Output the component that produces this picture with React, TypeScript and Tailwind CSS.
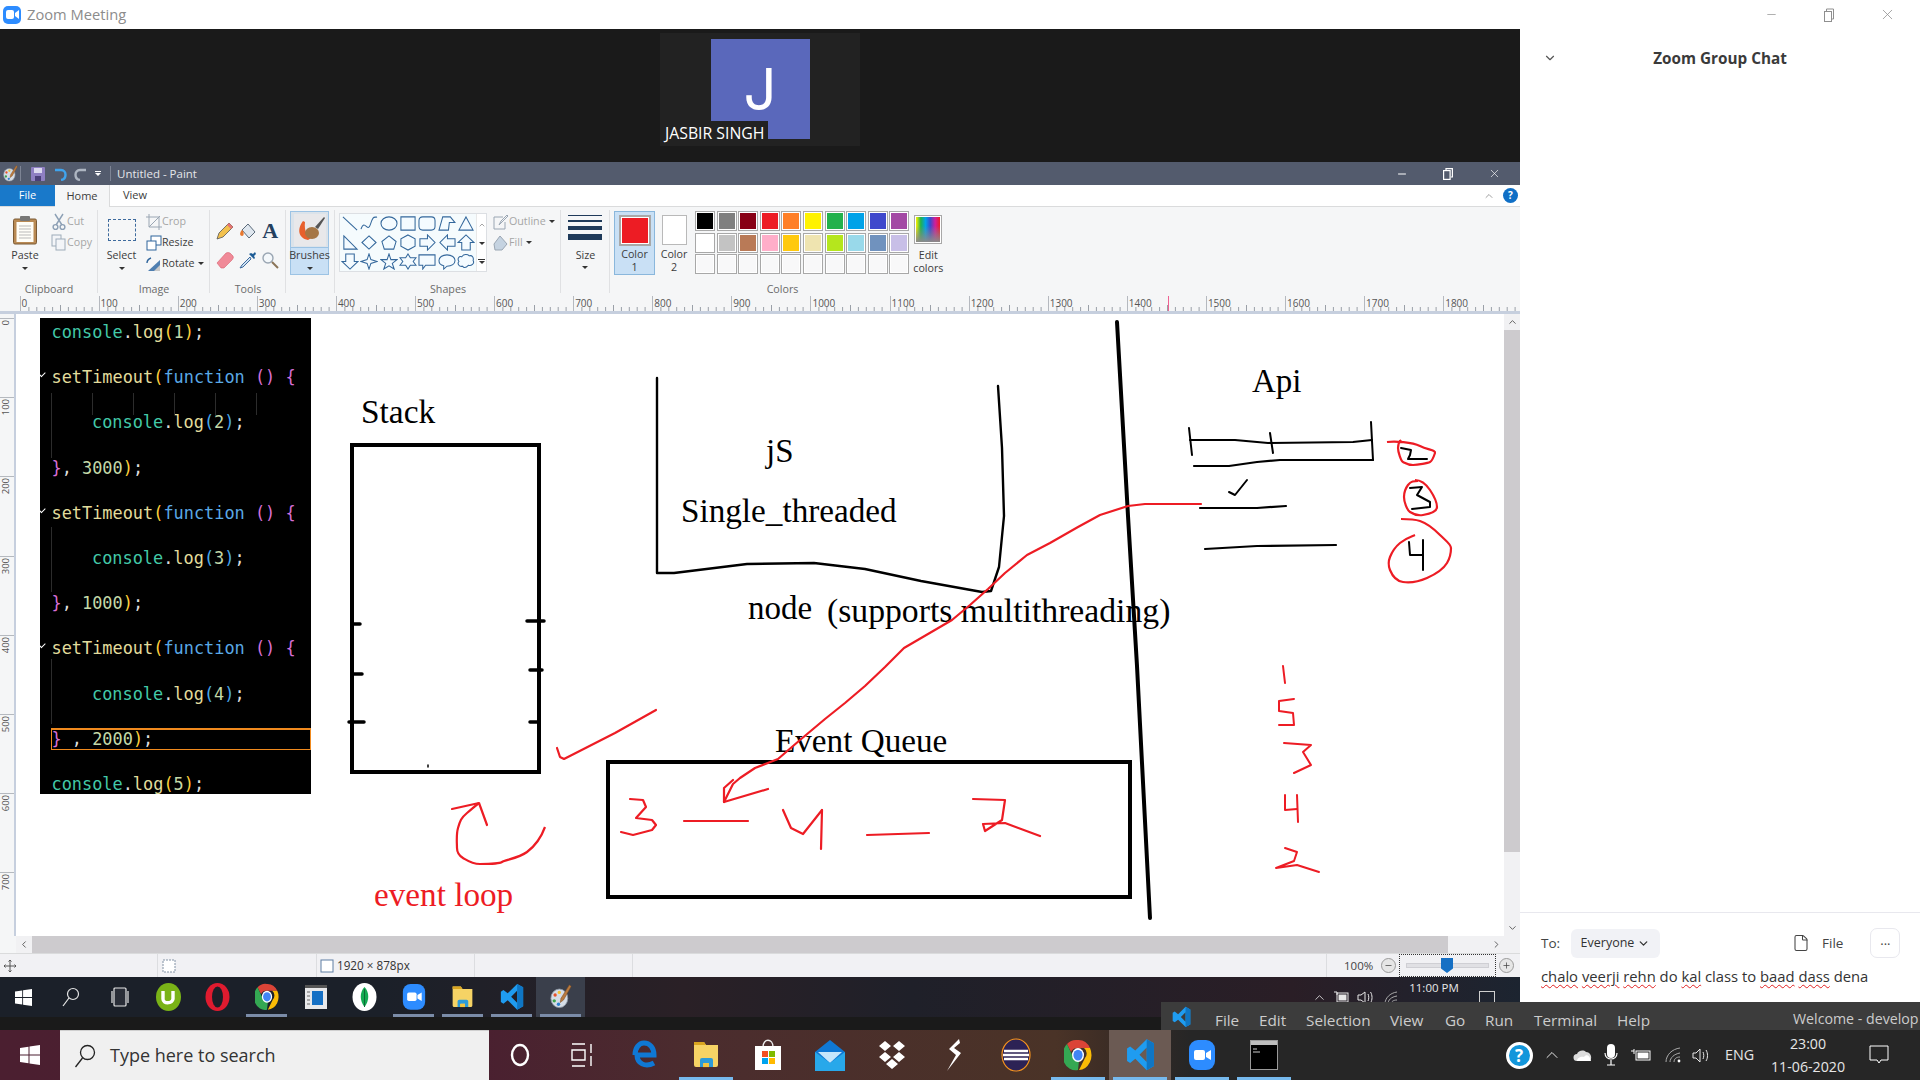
import React from "react";
import { ChevronDown, ChevronUp, ChevronLeft, ChevronRight, File as FileIcon, Minus, Plus, X } from "lucide-react";

const Win = ({ s = 20, c = "#fff" }: { s?: number; c?: string }) => (
  <svg width={s} height={s} viewBox="0 0 20 20"><path fill={c} d="M0 3l8.5-1.2v7.6H0zM9.5 1.6L20 0v9.4H9.5zM0 10.5h8.5v7.7L0 17zM9.5 10.5H20V20L9.5 18.4z" /></svg>
);
const ZoomIcon = ({ s = 28 }: { s?: number }) => (
  <svg width={s} height={s * 1.15} viewBox="0 0 28 32"><rect x="1" y="1" width="26" height="30" rx="9" fill="#2d8cff" /><rect x="6" y="11" width="11" height="10" rx="2" fill="#fff" /><path d="M18 14l5-3v10l-5-3z" fill="#fff" /></svg>
);
const Chrome = ({ s = 28 }: { s?: number }) => (
  <svg width={s} height={s * 1.15} viewBox="0 0 28 32">
    <path d="M14 1a13 15 0 0 1 12 8H14a7 7 0 0 0-7 4L3 5a13 15 0 0 1 11-4z" fill="#db4437" />
    <path d="M26 9a13 15 0 0 1-11 22l6-12a7 7 0 0 0-1-10z" fill="#fbbc05" />
    <path d="M3 5l6 13a7 7 0 0 0 6 4l-1 9A13 15 0 0 1 3 5z" fill="#34a853" />
    <ellipse cx="14" cy="16" rx="6" ry="7" fill="#fff" /><ellipse cx="14" cy="16" rx="4.6" ry="5.4" fill="#4285f4" />
  </svg>
);
const VS = ({ s = 28 }: { s?: number }) => (
  <svg width={s} height={s * 1.15} viewBox="0 0 28 32">
    <path d="M20 1l7 4v22l-7 4-11-11-5 4-3-2V10l3-2 5 4zM20 9l-7 7 7 7z" fill="#1f9cf0" />
    <path d="M20 1l7 4v22l-7 4z" fill="#0f76c4" />
  </svg>
);
const Folder = ({ s = 28 }: { s?: number }) => (
  <svg width={s} height={s * 1.15} viewBox="0 0 28 32">
    <path d="M2 3h10l2 3h12v20a2 2 0 0 1-2 2H4a2 2 0 0 1-2-2z" fill="#f6d365" /><path d="M2 3h10l2 3H2z" fill="#d9a520" />
    <path d="M8 28v-7a2 2 0 0 1 2-2h9a2 2 0 0 1 2 2v7h-4v-4h-5v4z" fill="#2d9bd8" /><rect x="11" y="24" width="6" height="4" fill="#f3c441" />
  </svg>
);
const Palette = ({ s = 26 }: { s?: number }) => (
  <svg width={s} height={s * 1.15} viewBox="0 0 26 30">
    <ellipse cx="11" cy="17" rx="10" ry="11" fill="#d5dde6" stroke="#8d97a5" />
    <circle cx="6" cy="13" r="2" fill="#e6532d" /><circle cx="11" cy="10" r="2" fill="#f6c232" /><circle cx="5" cy="20" r="2" fill="#3fa34d" /><circle cx="10" cy="24" r="2" fill="#2b7fd1" />
    <path d="M23 1l2 2-9 16-4 3 1-5z" fill="#b97a3f" stroke="#7a4c22" strokeWidth="0.6" />
  </svg>
);
const Slot = ({ w, bar, barC, bg, icon }: { w: string; bar?: boolean; barC?: string; bg?: string; icon: React.ReactNode }) => (
  <div className={`relative h-full flex items-center justify-center shrink-0 ${w} ${bg ?? ""}`}>
    {icon}
    {bar && <div className={`absolute bottom-0 left-[4px] right-[4px] h-[3px] ${barC ?? "bg-[#76b9ed]"}`} />}
  </div>
);

function RulerTicks() {
  return (
    <svg width="79" height="6" className="absolute bottom-0 left-0">
      {[1, 2, 3, 4, 5, 6, 7, 8, 9].map((i) => (
        <line key={i} x1={i * 7.9} x2={i * 7.9} y1={i === 5 ? 0 : 2} y2={6} stroke="#9aa0a8" />
      ))}
    </svg>
  );
}

const Small = ({ icon, label, dim, caret }: { icon: React.ReactNode; label: string; dim?: boolean; caret?: boolean }) => (
  <div className={`h-[21px] flex items-center text-[10.7px] whitespace-nowrap ${dim ? "text-[#a6a6a6]" : "text-[#3c3c3c]"}`}>
    <div className="w-[17px] h-[18px] flex items-center justify-center shrink-0">{icon}</div>
    <span>{label}</span>
    {caret && <span className="ml-[3px] w-0 h-0 border-x-[3px] border-x-transparent border-t-[3px] border-t-[#333]" />}
  </div>
);
const Caret = () => <div className="w-0 h-0 border-x-[3px] border-x-transparent border-t-[3px] border-t-[#333]" />;
const BigBtn = ({ w, icon, l1, l2, cls }: { w: string; icon: React.ReactNode; l1: string; l2?: string; cls?: string }) => (
  <div className={`h-[64px] flex flex-col items-center shrink-0 ${w} ${cls ?? ""}`}>
    <div className="h-[37px] flex items-center justify-center">{icon}</div>
    <div className="h-[14px] leading-[14px] text-[10.7px] text-[#3c3c3c]">{l1}</div>
    <div className="h-[13px] flex items-center text-[10.7px] text-[#3c3c3c]">{l2 ? l2 : <Caret />}</div>
  </div>
);
const Section = ({ w, label, children, noBorder }: { w: string; label?: string; children: React.ReactNode; noBorder?: boolean }) => (
  <div className={`relative flex flex-col shrink-0 ${w}`}>
    <div className="h-[75px] pt-[4px] flex">{children}</div>
    <div className="h-[14px] leading-[14px] text-center text-[10.7px] text-[#6b6b6b]">{label}</div>
    {!noBorder && <div className="absolute right-0 top-[3px] bottom-[3px] w-px bg-[#e0e1e3]" />}
  </div>
);

const polys: (string | { d: string })[] = [
  { d: "M2 2L17 16" },
  { d: "M1 15C5 3 8 20 11 10S15 3 18 2" },
  { d: "M9.5 2C14 2 18 5 18 9s-4 7-8.5 7S1 13 1 9s4-7 8.5-7z" },
  { d: "M2 2H17V16H2Z" },
  { d: "M5 2H14Q18 2 18 6V12Q18 16 14 16H5Q1 16 1 12V6Q1 2 5 2Z" },
  { d: "M5 2H13L18 8H12L11 16H1Z" },
  "9.5,2 17,16 2,16",
  "3,2 17,16 3,16",
  "9.5,2 17,9 9.5,16 2,9",
  "9.5,2 17,8 14.5,16 4.5,16 2,8",
  "9.5,1 17,5 17,13 9.5,17 2,13 2,5",
  "2,5 10,5 10,1 18,9 10,17 10,13 2,13",
  "18,5 10,5 10,1 2,9 10,17 10,13 18,13",
  "5,17 5,9 1,9 9.5,1 18,9 14,9 14,17",
  "5,1 5,9 1,9 9.5,17 18,9 14,9 14,1",
  "9.5,1 11.5,7 18,9 11.5,11 9.5,17 7.5,11 1,9 7.5,7",
  "9.5,1 11.5,7 18,7 13,11 15,17 9.5,13.5 4,17 6,11 1,7 7.5,7",
  "9.5,1 12,5 18,5 15,9 18,13 12,13 9.5,17 7,13 1,13 4,9 1,5 7,5",
  { d: "M1 2H18V13H8L5 17V13H1Z" },
  { d: "M9.5 2C14.5 2 18 4.5 18 8S14.5 14 9.5 14L6 17V13.5C3 13 1 11 1 8 1 4.5 4.5 2 9.5 2Z" },
  { d: "M5 4C7 1 11 1 13 3 16 2 18 5 17 8 19 11 15 14 12 13 9 16 7 16 6 14 2 15 0 11 2 9 0 6 2 3 5 4Z" },
];

const palette = [
  ["#000000", "#7f7f7f", "#880015", "#ed1c24", "#ff7f27", "#fff200", "#22b14c", "#00a2e8", "#3f48cc", "#a349a4"],
  ["#ffffff", "#c3c3c3", "#b97a57", "#ffaec9", "#ffc90e", "#efe4b0", "#b5e61d", "#99d9ea", "#7092be", "#c8bfe7"],
  Array(10).fill("#f8f8f9"),
];

function Ribbon() {
  return (
    <div className="h-[89px] bg-[#f5f6f7] flex">
      <Section w="w-[98px]" label="Clipboard">
        <BigBtn w="w-[50px]" l1="Paste" icon={
          <svg width="26" height="30" viewBox="0 0 26 30"><rect x="1.5" y="4" width="23" height="25" rx="1.5" fill="#b98a54" stroke="#7b5a34" /><rect x="4.5" y="7" width="17" height="20" fill="#fffef8" /><rect x="8" y="1" width="10" height="5" rx="1" fill="#777" /><path d="M7 11h12M7 14h12M7 17h12M7 20h12M7 23h12" stroke="#b9b9b9" /></svg>
        } />
        <div className="flex flex-col">
          <Small dim label="Cut" icon={<svg width="14" height="18" viewBox="0 0 14 18" fill="none" stroke="#8da0b5" strokeWidth="1.4"><path d="M3 1l7 11M11 1L4 12" /><circle cx="3.5" cy="14" r="2.4" /><circle cx="10.5" cy="14" r="2.4" /></svg>} />
          <Small dim label="Copy" icon={<svg width="15" height="17" viewBox="0 0 15 17" fill="#f3f5f8" stroke="#9eabb9"><rect x="1" y="1" width="9" height="11" /><rect x="5" y="5" width="9" height="11" /></svg>} />
        </div>
      </Section>
      <Section w="w-[112px]" label="Image">
        <BigBtn w="w-[47px]" l1="Select" icon={<div className="w-[28px] h-[22px] border border-dashed border-[#3d6a9d]" />} />
        <div className="flex flex-col">
          <Small dim label="Crop" icon={<svg width="16" height="16" viewBox="0 0 16 16" fill="none" stroke="#9aa6b3"><path d="M3 0v13h13M0 3h13v13M3 13L14 2" /></svg>} />
          <Small label="Resize" icon={<svg width="16" height="16" viewBox="0 0 16 16" fill="#fff" stroke="#2f659c"><rect x="5" y="1" width="10" height="9" /><rect x="1" y="6" width="9" height="9" /></svg>} />
          <Small caret label="Rotate" icon={<svg width="17" height="16" viewBox="0 0 17 16"><path d="M15 15H3L15 4z" fill="#4e7eb0" /><path d="M15 15H9L15 9z" fill="#c9c9c9" /><path d="M2 7c0-3 1-4 4-5" stroke="#2f659c" strokeWidth="1.4" fill="none" /></svg>} />
        </div>
      </Section>
      <Section w="w-[76px]" label="Tools">
        <div className="pl-[4px] pt-[5px] grid grid-cols-[repeat(3,22.5px)] grid-rows-[repeat(2,29px)] place-items-center">
          <svg width="18" height="18" viewBox="0 0 18 18"><path d="M1 17l2-6L13 1l4 4L7 15z" fill="#f2c14e" stroke="#555" strokeWidth="0.8" /><path d="M13 1l4 4-2 2-4-4z" fill="#e57373" /></svg>
          <svg width="18" height="18" viewBox="0 0 18 18"><path d="M9 2l7 8-6 6-7-8z" fill="#dfe7ef" stroke="#5a6a7a" /><path d="M3 8c-3 3-2 6 0 6s2-3 1-5z" fill="#e8782f" /></svg>
          <span className="font-['Liberation_Serif',serif] font-bold text-[22px] leading-none text-[#24405f]">A</span>
          <svg width="18" height="18" viewBox="0 0 18 18"><path d="M1 12L10 2q2-1 4 0l3 3q1 2-1 4l-8 8H5z" fill="#f08a98" stroke="#d6606f" strokeWidth="0.6" /></svg>
          <svg width="18" height="18" viewBox="0 0 18 18"><path d="M11 6L3 14l-2 3 3-1 8-8z" fill="#cfe2f3" stroke="#3d6a9d" /><path d="M10 3l5 5 1-1-1-2 2-2-1-2-2 2-2-1z" fill="#1d5c96" /></svg>
          <svg width="18" height="18" viewBox="0 0 18 18" fill="none"><circle cx="7" cy="7" r="5" stroke="#9aa6b3" strokeWidth="1.4" fill="#f4f8fb" /><path d="M11 11l6 6" stroke="#8a7458" strokeWidth="2" /></svg>
        </div>
      </Section>
      <Section w="w-[49px]">
        <div className="ml-[4px] w-[39px] h-[64px] bg-[#c9e0f5] border border-[#9cc3e4] flex flex-col items-center">
          <div className="w-full h-[36px] border-b border-[#9cc3e4] flex items-center justify-center bg-[#dbe3ea]">
            <svg width="32" height="32" viewBox="0 0 32 32"><rect width="32" height="32" fill="#e8e8ea" /><path d="M9 7c-6 8-5 17 5 19l5-3c-6 0-9-6-8-15z" fill="#e8602c" /><ellipse cx="18" cy="19" rx="7" ry="6" fill="#a57645" /><path d="M21 13L30 3l1 1-7 11z" fill="#555" /></svg>
          </div>
          <div className="h-[14px] leading-[14px] text-[10.7px] text-[#3c3c3c]">Brushes</div>
          <div className="h-[12px] flex items-center"><Caret /></div>
        </div>
      </Section>
      <Section w="w-[226px]" label="Shapes">
        <div className="ml-[4px] mt-[2px] w-[148px] h-[59px] bg-white border border-[#dcdfe3] flex shrink-0">
          <div className="w-[136px] grid grid-cols-7 grid-rows-3 place-items-center bg-[#f5fbfd]">
            {polys.map((p, i) => (
              <svg key={i} width="18" height="17" viewBox="0 0 19 18" fill="#f4fbff" stroke="#33679b" strokeWidth="1.1">
                {typeof p === "string" ? <polygon points={p} /> : <path d={p.d} fill={i < 2 ? "none" : "#f4fbff"} />}
              </svg>
            ))}
          </div>
          <div className="flex-1 flex flex-col items-center justify-around text-[#777] border-l border-[#e8e8e8]">
            <ChevronUp size={8} />
            <Caret />
            <div className="flex flex-col items-center gap-px"><div className="w-[7px] h-px bg-[#333]" /><Caret /></div>
          </div>
        </div>
        <div className="ml-[5px] flex flex-col">
          <Small dim caret label="Outline" icon={<svg width="16" height="16" viewBox="0 0 16 16" fill="none" stroke="#9aa6b3"><path d="M1 3h9M1 3v12h11V8M6 11l2-4 6-6 1 1-6 6z" /></svg>} />
          <Small dim caret label="Fill" icon={<svg width="16" height="16" viewBox="0 0 16 16"><path d="M7 1l7 8-5 6H2L1 9z" fill="#c5d3e1" stroke="#9aa6b3" /></svg>} />
        </div>
      </Section>
      <Section w="w-[49px]">
        <div className="absolute left-0 right-0 top-[41px] text-center h-[14px] leading-[14px] text-[10.7px] text-[#3c3c3c]">Size</div>
        <div className="absolute left-[21px] top-[59px]"><Caret /></div>
        <div className="ml-[7px] mt-[4px] w-[34px] h-[25px] flex flex-col justify-between">
          <div className="h-px bg-[#1f3a5a]" /><div className="h-[2px] bg-[#1f3a5a]" /><div className="h-[4px] bg-[#1f3a5a]" /><div className="h-[6px] bg-[#1f3a5a]" />
        </div>
      </Section>
      <Section w="w-[345px]" label="Colors" noBorder>
        <div className="ml-[4px] w-[41px] h-[64px] bg-[#c9e0f5] border border-[#8ab7dc] flex flex-col items-center text-[10.7px] text-[#3c3c3c] shrink-0">
          <div className="mt-[3px] w-[32px] h-[32px] bg-[#ed1c24] border-2 border-[#a9a9a9] outline outline-white -outline-offset-3" />
          <div className="mt-[1px] h-[14px] leading-[14px]">Color</div>
          <div className="h-[13px] leading-[13px]">1</div>
        </div>
        <div className="ml-[6px] w-[26px] h-[64px] flex flex-col items-center text-[10.7px] text-[#3c3c3c] shrink-0">
          <div className="mt-[4px] w-[25px] h-[30px] bg-white border border-[#b9b9b9]" />
          <div className="mt-[2px] h-[14px] leading-[14px]">Color</div>
          <div className="h-[13px] leading-[13px]">2</div>
        </div>
        <div className="ml-[8px] flex flex-col gap-[1.5px]">
          {palette.map((row, i) => (
            <div key={i} className="flex gap-[1.6px]">
              {row.map((c, j) => (
                <div key={j} className="w-[20px] h-[20px] border border-[#a8a8a8] bg-white p-px">
                  <div className="w-full h-full" style={{ background: c }} />
                </div>
              ))}
            </div>
          ))}
        </div>
        <BigBtn w="w-[38px]" l1="Edit" l2="colors" icon={
          <div className="w-[28px] h-[29px] border border-[#a8a8a8] p-px bg-white"><div className="w-full h-full bg-[linear-gradient(180deg,transparent_35%,#8a8a8a),linear-gradient(90deg,#fff200,#22b14c,#00a2e8,#3f48cc,#d01f9a,#ed1c24)]" /></div>
        } />
      </Section>
    </div>
  );
}

const K = ({ c, children }: { c: string; children: React.ReactNode }) => <span style={{ color: c }}>{children}</span>;
const TEAL = "#43c9a8", YEL = "#e2dc9c", GOLD = "#ffcf3a", BLUE = "#5aa9e6", PINK = "#d76fd6", NUM = "#c4d9a8", SKY = "#4aa8e8";
const logLine = (n: string, gold: boolean) => (
  <>
    <K c={TEAL}>console</K><K c="#ddd">.</K><K c={YEL}>log</K><K c={gold ? GOLD : SKY}>(</K><K c={NUM}>{n}</K><K c={gold ? GOLD : SKY}>)</K><K c="#ddd">;</K>
  </>
);
const setT = (
  <>
    <K c={YEL}>setTimeout</K><K c={GOLD}>(</K><K c={BLUE}>function</K> <K c={PINK}>()</K> <K c={PINK}>{"{"}</K>
  </>
);
const close = (n: string) => (
  <>
    <K c={PINK}>{"}"}</K><K c="#ddd">, </K><K c={NUM}>{n}</K><K c={GOLD}>)</K><K c="#ddd">;</K>
  </>
);

const CodeRow = ({ children, indent, fold }: { children: React.ReactNode; indent?: boolean; fold?: boolean }) => (
  <div className={`relative h-[45.2px] leading-[45.2px] whitespace-pre ${indent ? "pl-[52px]" : "pl-[11.5px]"}`}>
    {fold && <span className="absolute left-[1px] top-[16px] w-[3px] h-[6px] border-r border-b border-white rotate-45" />}
    {children}
  </div>
);

function CodePanel() {
  return (
    <div className="absolute left-[24px] top-[4px] w-[271px] h-[476px] bg-black overflow-hidden font-['DejaVu_Sans_Mono',monospace] text-[16.9px]">
      <div className="-mt-[8px]">
        <CodeRow>{logLine("1", true)}</CodeRow>
        <CodeRow fold>{setT}</CodeRow>
        <CodeRow indent>{logLine("2", false)}</CodeRow>
        <CodeRow>{close("3000")}</CodeRow>
        <CodeRow fold>{setT}</CodeRow>
        <CodeRow indent>{logLine("3", false)}</CodeRow>
        <CodeRow>{close("1000")}</CodeRow>
        <CodeRow fold>{setT}</CodeRow>
        <CodeRow indent>{logLine("4", false)}</CodeRow>
        <div className="relative h-[45.2px] leading-[45.2px] pl-[11.5px] whitespace-pre">
          <div className="absolute left-[11px] right-0 top-[11.5px] h-[22px] border border-t-2 border-[#f08a1e]" />
          <K c={PINK}>{"}"}</K><K c="#ddd"> , </K><K c={NUM}>2000</K><K c={GOLD}>)</K><K c="#ddd">;</K>
        </div>
        <CodeRow>{logLine("5", true)}</CodeRow>
      </div>
      <div className="absolute left-[11px] top-[75px] h-[65px] w-px bg-[#2c2c2c]" />
      <div className="absolute left-[11px] top-[209px] h-[65px] w-px bg-[#2c2c2c]" />
      <div className="absolute left-[11px] top-[341px] h-[65px] w-px bg-[#2c2c2c]" />
      <div className="absolute left-[52px] top-[75px] h-[22px] w-px bg-[#2c2c2c]" />
      <div className="absolute left-[93px] top-[75px] h-[22px] w-px bg-[#2c2c2c]" />
      <div className="absolute left-[134px] top-[75px] h-[22px] w-px bg-[#2c2c2c]" />
      <div className="absolute left-[175px] top-[75px] h-[22px] w-px bg-[#2c2c2c]" />
      <div className="absolute left-[216px] top-[75px] h-[22px] w-px bg-[#2c2c2c]" />
    </div>
  );
}

const pl = (pts: string, stroke: string, w = 2.2) => (
  <polyline points={pts} fill="none" stroke={stroke} strokeWidth={w} strokeLinejoin="round" strokeLinecap="round" />
);
const RED = "#ed1c24";

function Board() {
  const T = ({ x, y, t, c = "#000", s = 33 }: { x: number; y: number; t: string; c?: string; s?: number }) => (
    <text x={x} y={y} fontSize={s} fontFamily="'Liberation Serif', serif" fill={c}>{t}</text>
  );
  return (
    <svg className="absolute inset-0" width="1488" height="622" viewBox="16 314 1488 622">
      <T x={361} y={423} t="Stack" s={33.4} />
      <T x={766} y={462} t="jS" />
      <T x={681} y={522} t="Single_threaded" s={33.2} />
      <T x={748} y={619} t="node" />
      <T x={827} y={622} t="(supports multithreading)" s={33.7} />
      <T x={1252} y={392} t="Api" />
      <T x={775} y={752} t="Event Queue" s={33.2} />
      <T x={374} y={906} t="event loop" c={RED} s={33.2} />

      <rect x="352" y="445" width="187" height="327" fill="none" stroke="#000" strokeWidth="4" />
      {pl("352,624 360,624", "#000", 3.5)}{pl("352,674 362,674", "#000", 3.5)}{pl("349,722 364,722", "#000", 3.5)}
      {pl("527,621 544,621", "#000", 3.5)}{pl("530,670 542,670", "#000", 3.5)}{pl("530,722 539,722", "#000", 3.5)}
      {pl("428,765 428,767", "#000", 1.5)}

      {pl("657,378 657,573 674,573 747,564 814,563 865,569 921,581 982,592 991,591 999,567 1004,516 1002,448 998,386", "#000", 2.4)}

      {pl("1117,322 1128,516 1137,666 1150,918", "#000", 4)}

      <rect x="608" y="762" width="522" height="135" fill="none" stroke="#000" strokeWidth="4" />

      {pl("1190,440 1235,440 1268,443 1353,442 1372,440", "#000", 2.2)}
      {pl("1189,428 1192,455", "#000", 2)}{pl("1270,433 1273,453", "#000", 2)}{pl("1371,422 1373,460", "#000", 2)}
      {pl("1194,466 1229,466 1257,462 1280,460 1373,460", "#000", 2.2)}
      {pl("1229,492 1235,495 1247,480", "#000", 2)}
      {pl("1200,508 1257,508 1286,506", "#000", 2.2)}
      {pl("1205,549 1257,546 1336,545", "#000", 2.2)}

      {pl("1401,448 1411,450 1410,455 1408,459 1427,459", "#000", 2)}
      {pl("1410,488 1422,487 1417,495 1430,502 1430,507 1412,509", "#000", 2)}
      {pl("1409,542 1410,555 1423,555", "#000", 2)}{pl("1423,540 1423,570", "#000", 2)}

      <path d="M1387 442C1395 441 1412 442 1420 446S1436 450 1435 453 1432 461 1430 462 1418 465 1413 465 1405 463 1403 462 1398 452 1398 448 1400 441 1401 440" fill="none" stroke={RED} strokeWidth="2.2" />
      <path d="M1415 480C1421 480 1426 484 1430 490S1437 502 1437 507 1429 514 1423 515 1413 514 1410 512 1404 502 1404 497 1405 489 1408 485 1414 481 1418 481" fill="none" stroke={RED} strokeWidth="2.2" />
      <path d="M1401 519C1408 519 1414 519 1420 521S1435 530 1440 535 1451 544 1451 548 1450 558 1447 563 1436 574 1427 578 1410 583 1403 582 1392 575 1390 570 1388 562 1390 557 1394 548 1400 543 1410 537 1415 535" fill="none" stroke={RED} strokeWidth="2.2" />

      {pl("231,333 233,342 241,343 265,330 282,323 297,321", RED, 2.2)}
      {pl("557,748 560,757 564,759 615,733 656,710", RED, 2.2)}
      <path d="M545 827C541 838 535 846 527 852S505 860 502 862 488 864 480 864 468 861 463 858 457 852 457 848 456 835 458 828 461 818 467 813 475 806 479 803" fill="none" stroke={RED} strokeWidth="2.2" />
      {pl("452,809 479,803 487,825", RED, 2.2)}
      {pl("630,799 643,800 646,807 636,818 652,820 656,825 652,830 633,835 621,832", RED, 2.2)}

      {pl("1201,504 1145,504 1128,506 1100,515 1078,527 1050,543 1027,555 1005,573 988,589 970,605 952,620 928,634 904,648 885,667 865,686 845,703 825,719 800,740 778,759 755,768 740,778 733,784 724,802", RED, 2.2)}
      {pl("733,780 724,788 724,802 768,789", RED, 2.2)}
      {pl("684,821 748,821", RED, 2.2)}
      {pl("783,810 791,828 803,834 822,810", RED, 2.2)}{pl("822,810 821,849", RED, 2.2)}
      {pl("867,835 929,833", RED, 2.2)}
      {pl("973,799 1005,800 1002,820 985,831 983,824 1005,823 1040,836", RED, 2.2)}

      {pl("1283,666 1285,683", RED, 2)}
      {pl("1294,699 1279,701 1279,711 1293,713 1294,725 1279,725", RED, 2)}
      {pl("1284,743 1311,745 1303,752 1311,765 1294,773", RED, 2)}
      {pl("1285,795 1285,810 1297,809", RED, 2)}{pl("1297,795 1298,822", RED, 2)}
      {pl("1285,848 1297,852 1294,861 1276,868 1297,865 1319,872", RED, 2)}
    </svg>
  );
}

const Wavy = ({ children }: { children: React.ReactNode }) => (
  <span className="underline decoration-wavy decoration-[#e02020] decoration-1 underline-offset-2">{children}</span>
);

export default function App() {
  const hLabels = Array.from({ length: 19 }, (_, i) => i * 100);
  const vLabels = Array.from({ length: 8 }, (_, i) => i * 100);
  const GB = "bg-[#7b8ca8]";
  return (
    <div className="relative w-[1920px] h-[1080px] overflow-hidden flex flex-col bg-white font-['Open_Sans',sans-serif]">
      {/* Zoom title bar */}
      <div className="h-[29px] shrink-0 flex items-center bg-white">
        <div className="ml-[3px] w-[18px] h-[18px] rounded-[5px] bg-[#2d8cff] flex items-center justify-center">
          <svg width="13" height="9" viewBox="0 0 13 9"><rect width="8" height="9" rx="2" fill="#fff" /><path d="M9 3l4-3v9L9 6z" fill="#fff" /></svg>
        </div>
        <span className="ml-[6px] text-[14.7px] text-[#8c8c8c]">Zoom Meeting</span>
        <div className="ml-auto flex items-center text-[#8f8f8f]">
          <div className="w-[58px] flex justify-center"><Minus size={13} strokeWidth={1.3} /></div>
          <div className="w-[58px] flex justify-center">
            <svg width="12" height="14" viewBox="0 0 12 14" fill="none" stroke="#8f8f8f"><rect x="1.5" y="3.5" width="7" height="10" /><path d="M3.5 3V1H10.5V11H9" /></svg>
          </div>
          <div className="w-[58px] mr-[4px] flex justify-center"><X size={17} strokeWidth={1.1} /></div>
        </div>
      </div>

      <div className="flex-1 flex min-h-0">
        {/* Left: meeting + shared Paint */}
        <div className="w-[1520px] shrink-0 flex flex-col">
          <div className="h-[133px] bg-[#1a1a1a] flex justify-center shrink-0">
            <div className="relative mt-[4px] w-[200px] h-[113px] bg-[#222222] flex justify-center">
              <div className="mt-[6px] w-[99px] h-[100px] bg-[#5a68bb] flex items-center justify-center text-white text-[58px] leading-none font-['Inter',sans-serif]">J</div>
              <div className="absolute left-0 bottom-0 h-[25px] w-[108px] bg-[#222222] pl-[5px] text-white text-[15.8px] leading-[25px] whitespace-nowrap">JASBIR SINGH</div>
            </div>
          </div>

          {/* Paint title */}
          <div className="h-[23px] bg-[#535b6d] flex items-center shrink-0 text-[#e4e6ea]">
            <div className="w-[20px] flex justify-center"><Palette s={15} /></div>
            <div className="w-px h-[15px] bg-[#7d8494]" />
            <div className="w-[33px] flex justify-center">
              <svg width="14" height="14" viewBox="0 0 14 14"><rect width="14" height="14" rx="1" fill="#8e7fc2" /><rect x="3" y="1" width="8" height="5" fill="#dcd9ef" /><rect x="4" y="9" width="6" height="5" fill="#4a3f78" /></svg>
            </div>
            <svg width="13" height="14" viewBox="0 0 13 14" fill="none" stroke="#3fa4ee" strokeWidth="2.4"><path d="M1 3h6c6 0 6 9 0 10" /></svg>
            <svg className="ml-[7px]" width="13" height="14" viewBox="0 0 13 14" fill="none" stroke="#aeb6c2" strokeWidth="2.4"><path d="M12 3H6C0 3 0 12 6 13" /></svg>
            <div className="ml-[7px] w-[7px] flex flex-col items-center gap-px"><div className="w-[6px] h-px bg-white" /><div className="w-0 h-0 border-x-[3px] border-x-transparent border-t-[3px] border-t-white" /></div>
            <div className="ml-[9px] w-px h-[15px] bg-[#7d8494]" />
            <span className="ml-[6px] text-[11.5px]">Untitled - Paint</span>
            <div className="ml-auto flex items-center text-white">
              <div className="w-[46px] flex justify-center"><Minus size={12} /></div>
              <div className="w-[46px] flex justify-center"><svg width="10" height="12" viewBox="0 0 10 12" fill="none" stroke="#fff" strokeWidth="1.2"><rect x="0.6" y="2.6" width="6.5" height="8.8" /><path d="M3 2V.6H9.4V9H8" /></svg></div>
              <div className="w-[46px] mr-[3px] flex justify-center"><X size={13} strokeWidth={1.2} /></div>
            </div>
          </div>

          {/* Tabs */}
          <div className="h-[22px] bg-white flex items-stretch shrink-0 border-b border-[#dadbdc] text-[11px]">
            <div className="w-[55px] bg-[#1979ca] text-white flex items-center justify-center">File</div>
            <div className="w-[55px] bg-[#f5f6f7] -mb-px border-r border-[#dadbdc] text-[#3c3c3c] flex items-center justify-center">Home</div>
            <div className="w-[50px] text-[#3c3c3c] flex items-center justify-center">View</div>
            <div className="ml-auto flex items-center">
              <ChevronUp size={12} className="text-[#a0a0a0] mr-[8px]" />
              <div className="w-[15px] h-[15px] mr-[2px] rounded-full bg-[#0f6fc6] text-white text-[10px] font-bold flex items-center justify-center">?</div>
            </div>
          </div>

          <Ribbon />

          {/* Ruler */}
          <div className="h-[18px] relative bg-[#f5f6f7] flex shrink-0 pl-[19.5px] pb-[3px] overflow-hidden">
            {hLabels.map((n) => (
              <div key={n} className="relative w-[79.1px] h-full shrink-0 border-l border-[#b5b9bf] text-[10px] leading-[13px] pt-[1px] pl-[1px] text-[#555]">
                {n}
                <RulerTicks />
              </div>
            ))}
            <div className="absolute left-[1168px] top-0 bottom-[3px] w-px bg-[#f06292]" />
            <div className="absolute left-0 right-0 bottom-0 h-[3px] bg-[#c6cfde]" />
          </div>

          {/* Canvas row */}
          <div className="h-[622px] flex shrink-0">
            <div className="relative w-[16px] h-full bg-[#f5f6f7] border-r-[2px] border-[#c6cfde] overflow-hidden shrink-0">
              <div className="pt-[4px]">
                {vLabels.map((n) => (
                  <div key={n} className="relative h-[79.2px] border-t border-[#b5b9bf]">
                    <span className="absolute left-0 top-[1px] [writing-mode:vertical-rl] rotate-180 text-[9.5px] leading-[12px] text-[#555]">{n}</span>
                  </div>
                ))}
              </div>
            </div>
            <div className="relative flex-1 bg-white overflow-hidden">
              <Board />
              <CodePanel />
            </div>
            <div className="w-[16px] h-full bg-[#f1f1f3] flex flex-col items-center shrink-0">
              <ChevronUp size={11} className="text-[#555] h-[16px]" />
              <div className="w-full h-[522px] bg-[#cdcbce]" />
              <ChevronDown size={11} className="text-[#555] mt-auto h-[16px]" />
            </div>
          </div>

          {/* H scrollbar */}
          <div className="h-[18px] bg-[#f1f1f3] flex items-center shrink-0 border-b border-[#dadbdc]">
            <div className="w-[16px] h-full bg-[#f5f6f7]" />
            <ChevronLeft size={11} className="w-[16px] text-[#555]" />
            <div className="w-[1416px] h-full bg-[#cdcbce]" />
            <ChevronRight size={11} className="ml-auto mr-[18px] text-[#555]" />
          </div>

          {/* Status bar */}
          <div className="h-[23px] bg-[#f1f1f4] flex items-stretch shrink-0 text-[11.7px] text-[#333]">
            <div className="w-[158px] border-r border-[#dcdde0] pl-[3px] flex items-center">
              <svg width="14" height="14" viewBox="0 0 14 14" stroke="#555" fill="none"><path d="M7 1v12M1 7h12M5.5 2.5L7 1l1.5 1.5M5.5 11.5L7 13l1.5-1.5M2.5 5.5L1 7l1.5 1.5M11.5 5.5L13 7l-1.5 1.5" /></svg>
            </div>
            <div className="w-[159px] border-r border-[#dcdde0] pl-[4px] flex items-center">
              <svg width="14" height="14" viewBox="0 0 14 14" fill="#fff" stroke="#8292a5" strokeDasharray="2 1"><rect x="1" y="1" width="12" height="12" /></svg>
            </div>
            <div className="w-[158px] border-r border-[#dcdde0] pl-[3px] flex items-center gap-[3px]">
              <svg width="14" height="14" viewBox="0 0 14 14" fill="#fff" stroke="#5e7ea3"><rect x="1" y="1" width="12" height="12" /></svg>
              <span className="whitespace-nowrap">1920 × 878px</span>
            </div>
            <div className="w-[158px] border-r border-[#dcdde0]" />
            <div className="w-[694px] border-r border-[#dcdde0]" />
            <div className="flex-1 flex items-center pl-[17px] text-[#444]">
              <span className="w-[37px] text-[11.5px] whitespace-nowrap">100%</span>
              <div className="w-[15px] h-[15px] rounded-full border border-[#9a9a9a] bg-[#e6e6e6] flex items-center justify-center"><Minus size={9} /></div>
              <div className="relative ml-[3px] w-[97px] h-full border border-dotted border-[#333] flex items-center justify-center">
                <div className="w-[83px] h-[5px] bg-[#e0e0e4] border border-[#cfcfd4]" />
                <div className="absolute left-[41px] top-[3px] w-[12px] h-[15px] bg-[#1670c4] [clip-path:polygon(0_0,100%_0,100%_70%,50%_100%,0_70%)]" />
              </div>
              <div className="ml-[3px] w-[15px] h-[15px] rounded-full border border-[#9a9a9a] bg-[#e6e6e6] flex items-center justify-center"><Plus size={9} /></div>
            </div>
          </div>

          {/* Inner taskbar */}
          <div className="h-[40px] flex items-center shrink-0 bg-[linear-gradient(90deg,#1b2029_0%,#1b2029_25%,#2a2026_45%,#1f2029_60%,#2a1e26_85%,#1c2430_100%)]">
            <Slot w="w-[46px]" icon={<Win s={17} />} />
            <Slot w="w-[49px]" icon={<svg width="18" height="20" viewBox="0 0 18 20" fill="none" stroke="#e6e6e6" strokeWidth="1.2"><circle cx="11" cy="7" r="5.5" /><path d="M7 11l-6 8" /></svg>} />
            <Slot w="w-[49px]" icon={<svg width="20" height="20" viewBox="0 0 20 20" fill="none" stroke="#e6e6e6" strokeWidth="1.2"><rect x="4" y="1" width="12" height="18" rx="1" fill="#2a2e38" /><path d="M2 4v12M18 4v12" /></svg>} />
            <Slot w="w-[49px]" icon={<svg width="25" height="28" viewBox="0 0 25 28"><ellipse cx="12.5" cy="14" rx="12.5" ry="14" fill="#7ab317" /><path d="M7 8v8c0 5 9 5 10 0V8" stroke="#fff" strokeWidth="3.4" fill="none" /></svg>} />
            <Slot w="w-[49px]" icon={<svg width="25" height="28" viewBox="0 0 25 28"><ellipse cx="12.5" cy="14" rx="12" ry="14" fill="#e01b2f" /><ellipse cx="12.5" cy="14" rx="5.5" ry="10.5" fill="#1d1f28" /></svg>} />
            <Slot w="w-[49px]" bar barC={GB} icon={<Chrome s={24} />} />
            <Slot w="w-[49px]" icon={<svg width="22" height="24" viewBox="0 0 22 24"><rect width="22" height="24" fill="#e8e8ea" /><rect y="0" width="22" height="3" fill="#555" /><rect x="7" y="6" width="11" height="14" fill="#1670c4" /><path d="M2 7h3M2 11h3M2 15h3M2 19h3" stroke="#666" /></svg>} />
            <Slot w="w-[49px]" icon={<svg width="25" height="28" viewBox="0 0 25 28"><ellipse cx="12.5" cy="14" rx="12" ry="14" fill="#fff" /><path d="M12.5 4c5 5 5 14 0 20-5-6-5-15 0-20z" fill="#13aa52" /><path d="M12.5 6v18" stroke="#0d6b35" /></svg>} />
            <Slot w="w-[49px]" bar barC={GB} icon={<ZoomIcon s={24} />} />
            <Slot w="w-[49px]" bar barC={GB} icon={<Folder s={23} />} />
            <Slot w="w-[49px]" bar barC={GB} icon={<VS s={24} />} />
            <Slot w="w-[49px]" bar barC={GB} bg="bg-[#3a3f4b]" icon={<Palette s={22} />} />
            <div className="ml-auto flex items-center h-full text-[#e8e8e8]">
              <Slot w="w-[22px]" icon={<ChevronUp size={15} strokeWidth={1.3} />} />
              <Slot w="w-[23px]" icon={<svg width="15" height="14" viewBox="0 0 15 14" fill="none" stroke="#e8e8e8"><rect x="3" y="3" width="11" height="9" /><rect x="5" y="5" width="7" height="5" fill="#e8e8e8" /><path d="M0 2h3v3" /></svg>} />
              <Slot w="w-[25px]" icon={<svg width="17" height="15" viewBox="0 0 17 15" fill="none" stroke="#e8e8e8"><path d="M1 5h3l4-3v11L4 10H1zM11 4c1 2 1 5 0 7M13.5 2c2 3 2 8 0 11" /></svg>} />
              <Slot w="w-[26px]" icon={<svg width="14" height="15" viewBox="0 0 14 15" fill="none" stroke="#aaa"><path d="M1 14C1 8 6 3 13 2M4 14c0-4 3-7 9-8M7 14c0-2 2-4 6-4" /></svg>} />
              <div className="w-[60px] self-start text-center text-[11.5px] leading-[21px] whitespace-nowrap">11:00 PM</div>
              <div className="ml-[15px] mr-[25px] w-[16px] self-end h-[26px] border border-b-0 border-[#cfcfcf]" />
            </div>
          </div>
          <div className="flex-1 bg-[#1a1a1a]" />
        </div>

        {/* Chat */}
        <div className="flex-1 flex flex-col bg-white">
          <div className="relative h-[58px] flex items-center justify-center text-[15.3px] font-bold text-[#3a3a3a]">
            <ChevronDown size={14} className="absolute left-[23px] text-[#555]" />
            <span>Zoom Group Chat</span>
          </div>
          <div className="flex-1" />
          <div className="h-px bg-[#e8e8ee]" />
          <div className="h-[117px]">
            <div className="pt-[15px] pl-[21px] flex items-center text-[13px] text-[#444]">
              <span className="w-[30px] text-[13.5px]">To:</span>
              <div className="h-[29px] w-[89px] rounded-[6px] bg-[#f1f2f6] flex items-center justify-center gap-[3px] text-[12.5px] text-[#333]">
                Everyone <ChevronDown size={13} strokeWidth={2.4} />
              </div>
              <FileIcon size={18} strokeWidth={1.4} className="ml-[132px] text-[#444]" />
              <span className="ml-[12px] text-[13.5px]">File</span>
              <div className="ml-[27px] w-[30px] h-[30px] rounded-[7px] border border-[#e8e8ee] flex items-center justify-center text-[13px] leading-none pb-[6px]">...</div>
            </div>
            <div className="pl-[21px] mt-[6px] text-[14.8px] text-[#333] leading-[24px] whitespace-nowrap">
              <Wavy>chalo</Wavy> <Wavy>veerji</Wavy> <Wavy>rehn</Wavy> do <Wavy>kal</Wavy> class to <Wavy>baad</Wavy> <Wavy>dass</Wavy> dena
            </div>
          </div>
        </div>
      </div>

      {/* Overlapping VS Code window top */}
      <div className="absolute left-[1161px] top-[1002px] right-0 h-[28px] pt-[8px] overflow-hidden bg-[#3c3c3c] flex items-center text-[15.3px] text-[#cccccc] whitespace-nowrap">
        <div className="w-[43px] shrink-0 pl-[11px] -mt-[6px]"><VS s={19} /></div>
        <span className="w-[44px] shrink-0 pl-[11px]">File</span>
        <span className="w-[47px] shrink-0 pl-[11px]">Edit</span>
        <span className="w-[85px] shrink-0 pl-[11px]">Selection</span>
        <span className="w-[54px] shrink-0 pl-[10px]">View</span>
        <span className="w-[41px] shrink-0 pl-[11px]">Go</span>
        <span className="w-[47px] shrink-0 pl-[10px]">Run</span>
        <span className="w-[83px] shrink-0 pl-[12px]">Terminal</span>
        <span className="w-[60px] shrink-0 pl-[12px]">Help</span>
        <span className="ml-[128px] shrink-0 -mt-[2px] text-[14.2px]">Welcome - develop</span>
      </div>

      {/* Main taskbar */}
      <div className="h-[50px] shrink-0 flex items-center bg-[linear-gradient(90deg,#4b1f30_0%,#4a2030_25%,#4b2c2e_36%,#4a3327_55%,#3b2c25_58%,#262626_62%,#262626_100%)]">
        <Slot w="w-[60px]" icon={<Win s={20} />} />
        <div className="w-[429px] h-full shrink-0 bg-[#f0f0f0] flex items-center border-t border-[#cfcfcf]">
          <svg className="ml-[14px]" width="22" height="24" viewBox="0 0 22 24" fill="none" stroke="#222" strokeWidth="1.3"><circle cx="13.5" cy="8.5" r="7" /><path d="M8.5 14L1.5 23" /></svg>
          <span className="ml-[14px] text-[18px] text-[#333]">Type here to search</span>
        </div>
        <Slot w="w-[62px]" icon={<svg width="20" height="24" viewBox="0 0 20 24" fill="none" stroke="#fff" strokeWidth="2.4"><ellipse cx="10" cy="12" rx="8" ry="10" /></svg>} />
        <Slot w="w-[62px]" icon={<svg width="22" height="26" viewBox="0 0 22 26" stroke="#fff" fill="none" strokeWidth="1.4"><path d="M1 2h13M1 24h13M1 8h13v10H1zM20 2v9M20 14v10" /></svg>} />
        <Slot w="w-[62px]" icon={<svg width="26" height="30" viewBox="0 0 26 30" fill="none"><path d="M4 15C4 8 8 3 13 3c6 0 10 5 10 12H6c0 8 8 13 17 8" stroke="#0f78d4" strokeWidth="5" /></svg>} />
        <Slot w="w-[62px]" bar icon={<Folder s={28} />} />
        <Slot w="w-[62px]" icon={<svg width="28" height="32" viewBox="0 0 28 32"><path d="M9 8c0-9 10-9 10 0" stroke="#eee" strokeWidth="1.4" fill="none" /><rect x="1" y="7" width="26" height="24" fill="#fff" /><rect x="8" y="12" width="6" height="6" fill="#f25022" /><rect x="15" y="12" width="6" height="6" fill="#7fba00" /><rect x="8" y="19" width="6" height="6" fill="#00a4ef" /><rect x="15" y="19" width="6" height="6" fill="#ffb900" /></svg>} />
        <Slot w="w-[62px]" icon={<svg width="30" height="32" viewBox="0 0 30 32"><path d="M15 1L30 13v19H0V13z" fill="#0f78d4" /><path d="M3 13h24L15 24z" fill="#c7e6fb" /><path d="M0 13l15 11L30 13v19H0z" fill="#28a8ea" /></svg>} />
        <Slot w="w-[62px]" icon={<svg width="30" height="30" viewBox="0 0 30 30" fill="#fff"><path d="M8 1l6 5-6 5-6-5zM22 1l6 5-6 5-6-5zM8 12l6 5-6 5-6-5zM22 12l6 5-6 5-6-5zM15 19l6 5-6 5-6-5z" /></svg>} />
        <Slot w="w-[62px]" icon={<svg width="16" height="32" viewBox="0 0 16 32" fill="#fff"><path d="M13 0L3 10l7 6-9 16 14-18-7-5 6-5z" /></svg>} />
        <Slot w="w-[62px]" icon={<svg width="30" height="34" viewBox="0 0 30 34"><ellipse cx="15" cy="17" rx="14" ry="16" fill="#2c2255" stroke="#f7941e" strokeWidth="1.2" /><path d="M3 13h24M2 17h26M3 21h24" stroke="#fff" strokeWidth="2.4" /></svg>} />
        <Slot w="w-[62px]" bar icon={<Chrome s={28} />} />
        <Slot w="w-[62px]" bar bg="bg-[#6b5a53]" icon={<VS s={29} />} />
        <Slot w="w-[62px]" bar icon={<ZoomIcon s={28} />} />
        <Slot w="w-[62px]" bar icon={<svg width="28" height="30" viewBox="0 0 28 30"><rect x="0.5" y="0.5" width="27" height="29" fill="#000" stroke="#9a9a9a" /><rect x="1" y="1" width="26" height="4" fill="#bdbdbd" /><path d="M3 9h4M3 12h7" stroke="#ccc" /></svg>} />
        <div className="flex-1" />
        <Slot w="w-[32px]" icon={<div className="w-[27px] h-[27px] rounded-full bg-[#1296db] border-[3px] border-white flex items-center justify-center text-white font-bold text-[17px] leading-none">?</div>} />
        <Slot w="w-[34px]" icon={<ChevronUp size={20} strokeWidth={1.2} className="text-[#e6e6e6]" />} />
        <Slot w="w-[27px]" icon={<svg width="20" height="14" viewBox="0 0 20 14"><path d="M4 13a3.5 3.5 0 0 1 0-7c1-3 6-5 9-2 4 0 7 5 4 9z" fill="#dcdcdc" /><path d="M4 13c0-3 4-5 7-4 2-3 6-2 7 4z" fill="#fff" /></svg>} />
        <Slot w="w-[30px]" icon={<svg width="14" height="22" viewBox="0 0 14 22" fill="none"><rect x="3" y="0" width="8" height="14" rx="4" fill="#fff" /><path d="M1 9c0 8 12 8 12 0M7 16v5M3 21h8" stroke="#fff" strokeWidth="1.2" /></svg>} />
        <Slot w="w-[30px]" icon={<svg width="20" height="14" viewBox="0 0 20 14" fill="none" stroke="#fff"><rect x="5" y="3" width="14" height="9" /><rect x="7" y="5" width="10" height="5" fill="#fff" /><path d="M0 3h3M3 1v5" /></svg>} />
        <Slot w="w-[34px]" icon={<svg width="16" height="16" viewBox="0 0 16 16" fill="none" stroke="#aaa"><path d="M1 15C1 8 7 2 15 1M5 15c0-4 4-8 10-9M9 15c0-3 2-5 6-5" /><circle cx="14" cy="14" r="1.4" fill="#fff" stroke="none" /></svg>} />
        <Slot w="w-[23px]" icon={<svg width="20" height="17" viewBox="0 0 20 17" fill="none" stroke="#e6e6e6"><path d="M1 6h3l4-4v13l-4-4H1zM11 5c1 2 1 5 0 7M14 3c2 3 2 8 0 11" /></svg>} />
        <div className="w-[53px] text-center text-[14.3px] text-[#e6e6e6] shrink-0">ENG</div>
        <div className="w-[84px] flex flex-col items-center text-[14.2px] leading-[23px] text-[#e6e6e6] shrink-0"><span>23:00</span><span>11-06-2020</span></div>
        <Slot w="w-[58px]" icon={<svg width="20" height="20" viewBox="0 0 20 20" fill="none" stroke="#fff"><path d="M1 1h18v14h-7l-2 3-2-3H1z" /></svg>} />
        <div className="w-[12px]" />
      </div>
    </div>
  );
}
